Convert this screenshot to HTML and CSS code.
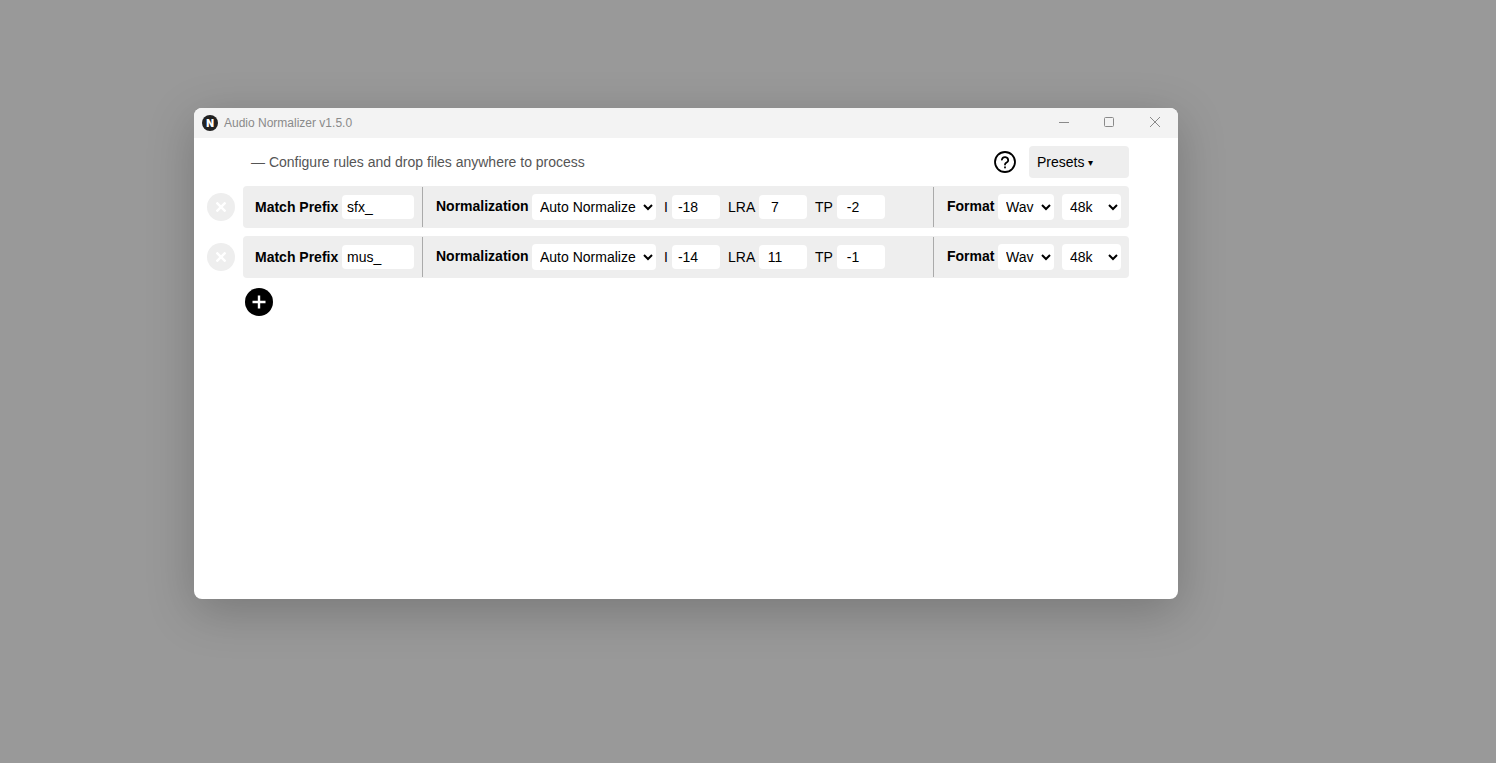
FILE: index.html
```html
<!doctype html>
<html lang="en">
  <head>
    <meta charset="UTF-8" />
    <meta name="viewport" content="width=device-width, initial-scale=1.0" />
    <title>Audio Normalizer</title>
    <link rel="stylesheet" href="styles.css">
  </head>
  <body>
    <div class="window">
      <div class="titlebar">
        <span class="logo">N</span>
        <span class="app-title">Audio Normalizer v1.5.0</span>
        <div class="window-controls">
          <button class="window-btn window-btn-min" aria-label="Minimize">
            <svg width="10" height="10" viewBox="0 0 10 10"><path d="M0 5.5h10" /></svg>
          </button>
          <button class="window-btn" aria-label="Maximize">
            <svg width="10" height="10" viewBox="0 0 10 10"><rect x="0.5" y="0.5" width="9" height="9" rx="1" /></svg>
          </button>
          <button class="window-btn" aria-label="Close">
            <svg width="10" height="10" viewBox="0 0 10 10"><path d="M0 0l10 10M10 0l-10 10" /></svg>
          </button>
        </div>
      </div>

      <div class="content">
        <div class="toolbar">
          <p class="subtitle">— Configure rules and drop files anywhere to process</p>
          <button class="help-btn" aria-label="Help">
            <svg width="22" height="22" viewBox="0 0 22 22">
              <circle cx="11" cy="11" r="10" />
              <path d="M7.9 8.6a3.2 3.2 0 0 1 6.3 0.8c0 2-3.2 2.3-3.2 4.1" />
              <path d="M11 16.2v0.3" />
            </svg>
          </button>
          <button class="presets-btn">Presets <span class="caret">▾</span></button>
        </div>

        <div class="rule">
          <button class="remove-btn" aria-label="Remove rule">
            <svg width="10" height="10" viewBox="0 0 10 10"><path d="M0.5 0.5l9 9M9.5 0.5l-9 9" /></svg>
          </button>
          <div class="rule-row">
            <div class="section section-prefix">
              <label class="label-strong">Match Prefix</label>
              <input class="text-input" type="text" value="sfx_">
            </div>
            <div class="section section-norm">
              <label class="label-strong">Normalization</label>
              <select class="select-mode">
                <option>Auto Normalize</option>
                <option>Peak Only</option>
              </select>
              <label class="label-param label-i">I</label>
              <input class="num-input" type="text" value="-18">
              <label class="label-param label-lra">LRA</label>
              <input class="num-input" type="text" value="7">
              <label class="label-param label-tp">TP</label>
              <input class="num-input" type="text" value="-2">
            </div>
            <div class="section section-format">
              <label class="label-strong">Format</label>
              <select class="select-format">
                <option>Wav</option>
                <option>Mp3</option>
              </select>
              <select class="select-rate">
                <option>48k</option>
                <option>44.1k</option>
              </select>
            </div>
          </div>
        </div>

        <div class="rule">
          <button class="remove-btn" aria-label="Remove rule">
            <svg width="10" height="10" viewBox="0 0 10 10"><path d="M0.5 0.5l9 9M9.5 0.5l-9 9" /></svg>
          </button>
          <div class="rule-row">
            <div class="section section-prefix">
              <label class="label-strong">Match Prefix</label>
              <input class="text-input" type="text" value="mus_">
            </div>
            <div class="section section-norm">
              <label class="label-strong">Normalization</label>
              <select class="select-mode">
                <option>Auto Normalize</option>
                <option>Peak Only</option>
              </select>
              <label class="label-param label-i">I</label>
              <input class="num-input" type="text" value="-14">
              <label class="label-param label-lra">LRA</label>
              <input class="num-input" type="text" value="11">
              <label class="label-param label-tp">TP</label>
              <input class="num-input" type="text" value="-1">
            </div>
            <div class="section section-format">
              <label class="label-strong">Format</label>
              <select class="select-format">
                <option>Wav</option>
                <option>Mp3</option>
              </select>
              <select class="select-rate">
                <option>48k</option>
                <option>44.1k</option>
              </select>
            </div>
          </div>
        </div>

        <button class="add-btn" aria-label="Add rule">
          <svg width="28" height="28" viewBox="0 0 28 28">
            <circle cx="14" cy="14" r="14" />
            <path d="M14 7.5v13M7.5 14h13" />
          </svg>
        </button>
      </div>
    </div>
  </body>
</html>
```

FILE: styles.css
```css
* {
  box-sizing: border-box;
}

html,
body {
  height: 100%;
}

body {
  margin: 0;
  padding: 108px 0 0 194px;
  background: #999999;
  font-family: "Liberation Sans", Arial, sans-serif;
  font-size: 14px;
  color: #000;
  overflow: hidden;
}

button {
  font-family: inherit;
  border: none;
  padding: 0;
  background: none;
}

.window {
  width: 984px;
  height: 491px;
  background: #fff;
  border-radius: 8px;
  overflow: hidden;
  box-shadow: 0 12px 48px rgba(0, 0, 0, 0.22);
}

.titlebar {
  display: flex;
  align-items: center;
  height: 30px;
  padding-left: 8px;
  background: #f3f3f3;
}

.logo {
  display: flex;
  align-items: center;
  justify-content: center;
  width: 16px;
  height: 16px;
  border-radius: 50%;
  background: #222;
  color: #fff;
  font-family: Inter, "Liberation Sans", sans-serif;
  font-size: 10px;
  font-weight: 900;
}

.app-title {
  margin-left: 6px;
  font-size: 12px;
  color: #8a8a8a;
}

.window-controls {
  display: flex;
  align-self: flex-start;
  margin-left: auto;
}

.window-btn {
  display: flex;
  align-items: center;
  justify-content: center;
  width: 46px;
  height: 28px;
}

.window-btn-min {
  width: 44px;
}

.window-btn svg {
  fill: none;
  stroke: #8a8a8a;
  stroke-width: 1;
}

.content {
  display: flex;
  flex-direction: column;
  gap: 8px;
  padding: 8px 49px 0 13px;
}

.toolbar {
  display: flex;
  align-items: center;
  height: 32px;
}

.subtitle {
  margin: 0 0 0 44px;
  color: #555;
}

.help-btn {
  display: flex;
  margin-left: auto;
  margin-right: 13px;
}

.help-btn svg {
  fill: none;
  stroke: #000;
  stroke-width: 1.8;
  stroke-linecap: round;
}

.presets-btn {
  width: 100px;
  height: 32px;
  padding-left: 8px;
  border-radius: 4px;
  background: #eee;
  font-size: 14px;
  color: #000;
  text-align: left;
}

.caret {
  font-size: 10px;
  vertical-align: 1px;
}

.rule {
  display: flex;
  align-items: center;
  gap: 8px;
}

.remove-btn {
  display: flex;
  align-items: center;
  justify-content: center;
  width: 28px;
  height: 28px;
  border-radius: 50%;
  background: #eee;
}

.remove-btn svg {
  stroke: #fff;
  stroke-width: 2.4;
}

.rule-row {
  display: flex;
  flex: 1;
  height: 42px;
  border-radius: 4px;
  background: #eee;
}

.section {
  display: flex;
  align-items: center;
  margin: 1px 0;
}

.section + .section {
  border-left: 1px solid #aaa;
}

.section-prefix {
  width: 179px;
  padding-left: 12px;
  gap: 3px;
}

.section-prefix .label-strong {
  width: 84px;
}

.section-norm {
  width: 511px;
  padding-left: 13px;
}

.section-norm .label-strong {
  width: 92px;
}

.section-format {
  flex: 1;
  padding-left: 13px;
}

.section-format .label-strong {
  width: 47px;
}

.label-strong {
  flex: none;
  font-weight: bold;
  white-space: nowrap;
}

.section-norm .label-strong,
.section-format .label-strong {
  position: relative;
  top: -1px;
}

.label-param {
  flex: none;
  margin: 0 4px 0 8px;
  white-space: nowrap;
}

.label-i {
  width: 4px;
}

.label-lra {
  width: 27px;
}

.label-tp {
  width: 18px;
}

.section-norm .select-mode {
  margin-left: 4px;
}

input,
select {
  border: none;
  border-radius: 4px;
  background: #fff;
  font-family: inherit;
  font-size: 14px;
  color: #000;
}

.text-input {
  flex: none;
  width: 72px;
  height: 24px;
  padding: 0 5px;
}

.num-input {
  flex: none;
  width: 48px;
  height: 24px;
  padding: 0 21px 0 5px;
  text-align: center;
}

select {
  flex: none;
  height: 26px;
  padding: 4px;
}

.select-mode {
  width: 124px;
}

.select-format {
  width: 56px;
  margin-left: 4px;
}

.select-rate {
  width: 59px;
  margin-left: 8px;
}

.add-btn {
  display: flex;
  align-self: flex-start;
  margin: 2px 0 0 38px;
}

.add-btn svg circle {
  fill: #000;
}

.add-btn svg path {
  stroke: #fff;
  stroke-width: 2.4;
}
```
